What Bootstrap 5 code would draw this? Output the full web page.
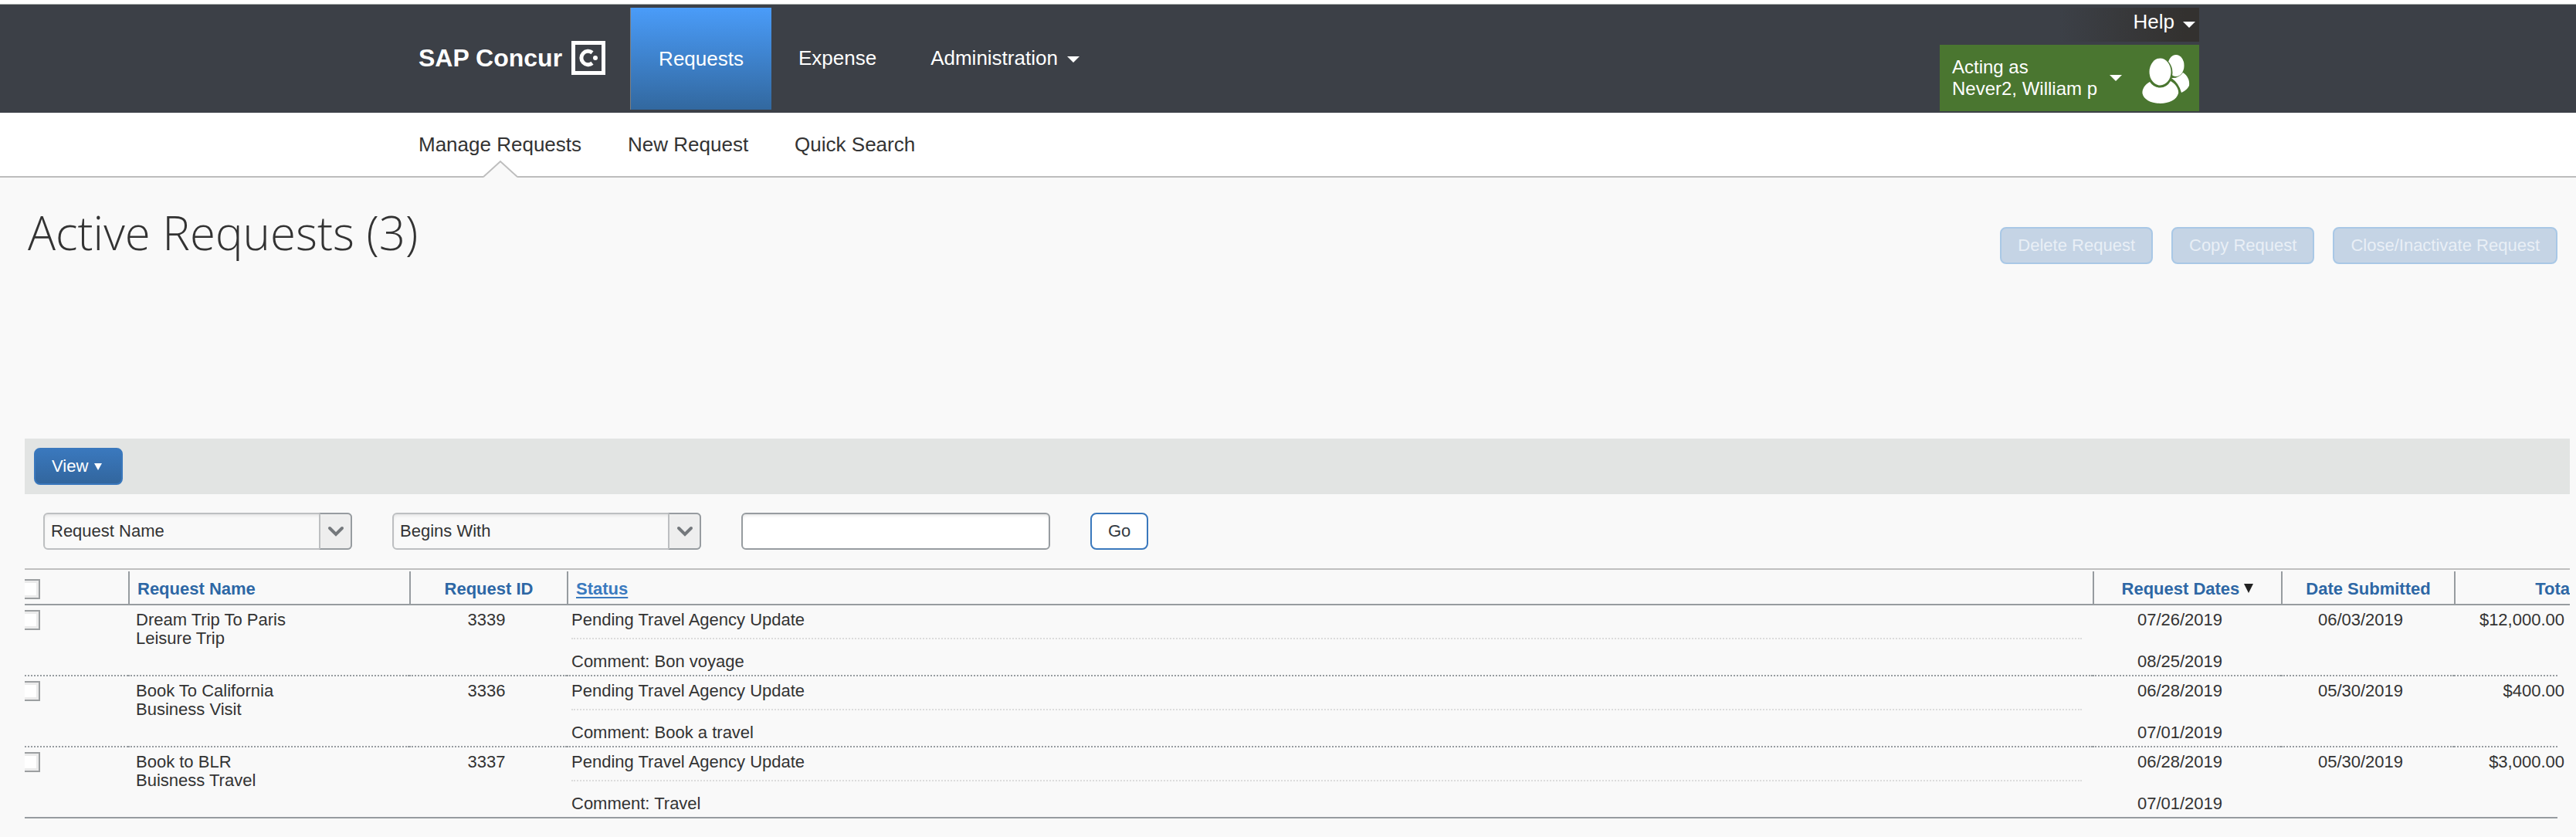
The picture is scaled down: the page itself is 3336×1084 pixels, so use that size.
<!DOCTYPE html>
<html lang="en">
<head>
<meta charset="utf-8">
<meta name="viewport" content="width=device-width, initial-scale=1">
<title>Active Requests - SAP Concur</title>
<link href="https://cdn.jsdelivr.net/npm/bootstrap@5.3.0/dist/css/bootstrap.min.css" rel="stylesheet">
<style>
  body { background: #f9f9f9; color: #333; font-family: "Liberation Sans", Arial, sans-serif; font-size: 22px; line-height: 24px; }
  .shell { max-width: 2360px; }
  .topbar { background: #3c4047; border-top: 1px solid #aab0ae; margin-top: 5px; height: 141px; color: #fff; font-size: 26px; line-height: 32px; }
  .topbar a { color: #fff; text-decoration: none; }
  .main-link { display: flex; align-items: center; padding: 0 35px; height: 130px; }
  .main-link.brand { font-size: 32px; font-weight: 700; padding: 0 32px 0 54px; gap: 12px; }
  .main-link.active { height: 132px; padding: 0 36px; background: linear-gradient(#4a9cf9, #32689f); border-left: 1px solid #7b8085; }
  .arrow-down { display: inline-block; border: 8px solid transparent; border-top-color: #fff; border-bottom: 0; }
  .user-zone { width: 336px; }
  .help-link { height: 44px; width: 180px; padding-right: 5px; gap: 11px; background: linear-gradient(to right, #3c4047, #33312f 90%); }
  .acting { background: #4a7630; height: 86px; font-size: 24px; line-height: 28px; padding: 0 12px 0 16px; border: 0; color: #fff; }
  .subbar { background: #fff; border-bottom: 2px solid #bdbdbd; height: 84px; font-size: 26px; line-height: 32px; }
  .sub-items { gap: 60px; padding-left: 54px; }
  .subbar a { position: relative; color: #333; text-decoration: none; height: 84px; padding-top: 25px; }
  .subbar .notch { position: absolute; left: 50%; bottom: 0; margin-left: -22px; }
  .page-title { font-family: "Open Sans", sans-serif; font-weight: 300; font-size: 60px; line-height: 72px; margin: 0; }
  .title-row { padding: 35px 24px 0 36px; min-height: 338px; }
  .act-btn { font-size: 22px; line-height: 24px; height: 48px; border-width: 2px; border-radius: 8px; padding: 0 21px; }
  .act-btn:disabled { background: #c5d4e5; border-color: #a9c8e6; color: #e9eff6; opacity: 1; }
  .title-row .actions { gap: 24px; padding-top: 29px; }
  .list-zone { margin: 0 8px 0 32px; overflow: hidden; }
  .toolbar-strip { background: #e2e4e3; padding: 12px; }
  .view-btn { border: 2px solid #3a78bd; background: linear-gradient(#3a78bd, #32669e); color: #fff; padding: 0 25px 0 21px; }
  .tiny-arrow { display: inline-block; border: 5px solid transparent; border-top: 9px solid currentColor; border-bottom: 0; }
  .filters { gap: 52px; padding: 24px; }
  .pick, .term { position: relative; width: 400px; height: 48px; }
  .pick select, .term { width: 100%; height: 48px; border: 2px solid #bdbfc1; border-radius: 6px; background: #f9f9f9; font-size: 22px; line-height: 24px; padding: 0 50px 0 8px; color: #333; box-shadow: inset 0 3px 4px -2px #ddd; }
  .pick .drop { position: absolute; right: 0; top: 0; width: 43px; height: 48px; border: 2px solid #979ca0; border-left-color: #bdbfc1; border-radius: 0 6px 6px 0; background: #eee; pointer-events: none; }
  .term { width: 400px; background: #fff; border-color: #979ca0; }
  .go-btn { background: #fff; border-color: #3a78bd; color: #333a42; }
  .grid-wrap { border-top: 2px solid #bfbfbf; padding-top: 2px; }
  .req-grid { width: 100%; table-layout: fixed; border-collapse: separate; border-spacing: 0; }
  .req-grid th { height: 44px; padding: 11px 10px 7px; border-bottom: 2px solid #979ca0; color: #2d67a5; font-weight: 700; vertical-align: top; white-space: nowrap; }
  .req-grid th + th { border-left: 2px solid #979ca0; }
  .req-grid th a { color: inherit; text-decoration: none; }
  .req-grid th a.sorted { color: #3a7abf; text-decoration: underline; text-decoration-thickness: 2px; text-underline-offset: 3px; }
  .req-grid .tiny-arrow { color: #222; border-width: 12px 6px 0; margin-bottom: 2px; }
  .req-grid td { padding: 7px 14px 5px 10px; border-bottom: 2px dotted #979ca0; vertical-align: top; }
  .req-grid tr:last-child td { border-bottom-style: solid; }
  .req-grid tr td.edge { border: 0; padding: 0; }
  .req-grid td.tight { padding-left: 6px; }
  .req-grid td.num { padding-left: 0; padding-right: 18px; }
  .req-grid th.tick, .req-grid td.tick { padding: 6px 0 0; }
  .req-grid th.tick { padding-top: 10px; }
  .req-grid .tick input { display: block; appearance: none; width: 26px; height: 26px; margin: 0 0 0 -6px; border: 2px solid #9c9fa1; background: #fff; box-shadow: inset 0 0 0 3px #ebebeb; }
  .req-grid .rule { border-top: 2px dotted #dcdcdc; margin: 11px 0 17px; opacity: 1; }
  .req-grid .later { margin-top: 30px; }
  .req-grid .amount { margin-right: -27px; }
</style>
<script src="https://cdn.jsdelivr.net/npm/bootstrap@5.3.0/dist/js/bootstrap.bundle.min.js"></script>
</head>
<body>
<div class="bg-white overflow-hidden">
<header class="topbar">
  <div class="shell mx-auto d-flex h-100">
    <nav class="d-flex align-items-start flex-grow-1 pt-1" aria-label="Main">
      <a href="#" class="main-link brand">
        <span>SAP Concur</span>
        <svg width="44" height="44" viewBox="0 0 44 44" aria-hidden="true">
          <rect x="2.5" y="2.5" width="39" height="39" fill="none" stroke="#fff" stroke-width="5"/>
          <path d="M27 15.2A8.7 8.7 0 1 0 27 28.8" fill="none" stroke="#fff" stroke-width="5"/>
          <circle cx="31" cy="22" r="3" fill="#fff"/>
        </svg>
      </a>
      <a href="#" class="main-link active">Requests</a>
      <a href="#" class="main-link">Expense</a>
      <a href="#" class="main-link gap-2">Administration <span class="arrow-down mt-1 ms-1"></span></a>
    </nav>
    <div class="user-zone d-flex flex-column pt-1 gap-1">
      <a href="#" class="help-link d-flex align-items-center justify-content-end align-self-end"><span class="pb-2">Help</span> <span class="arrow-down"></span></a>
      <button type="button" class="acting d-flex align-items-center text-start">
        <span class="flex-grow-1">Acting as<br>Never2, William p</span>
        <span class="arrow-down"></span>
        <svg class="ms-4" width="64" height="66" viewBox="0 0 64 66" fill="#fff" aria-hidden="true">
          <ellipse cx="46" cy="17" rx="10.5" ry="14"/>
          <path d="M40 33Q49 34 55 26C61 30 64 36 63 43Q60 49 53 52Q50 40 40 33Z"/>
          <ellipse cx="25.500" cy="26" rx="16" ry="19" fill="#4a7630"/>
          <ellipse cx="25.500" cy="25" rx="14" ry="17.500"/>
          <path d="M12 38C5 42 2 48 2.500 53C4 61 14 66 25.500 66S47 61 49 53C50 48 46 41 39 37Q34 45.500 25.500 45.500T12 38Z"/>
        </svg>
      </button>
    </div>
  </div>
</header>
<nav class="subbar" aria-label="Requests">
  <div class="shell mx-auto">
    <div class="sub-items d-flex">
      <a href="#">Manage Requests
        <svg class="notch" width="44" height="23" viewBox="0 0 44 23" aria-hidden="true"><path d="M0 23L1 21L22 1L43 21L44 23Z" fill="#f9f9f9"/><path d="M0 22L22 2L44 22" fill="none" stroke="#bdbdbd" stroke-width="2"/></svg>
      </a>
      <a href="#">New Request</a>
      <a href="#">Quick Search</a>
    </div>
  </div>
</nav>
</div>
<main>
  <div class="title-row d-flex justify-content-between align-items-start">
    <h1 class="page-title">Active Requests (3)</h1>
    <div class="actions d-flex">
      <button type="button" class="btn act-btn" disabled>Delete Request</button>
      <button type="button" class="btn act-btn" disabled>Copy Request</button>
      <button type="button" class="btn act-btn" disabled>Close/Inactivate Request</button>
    </div>
  </div>
  <div class="list-zone">
    <div class="toolbar-strip d-flex">
      <button type="button" class="btn act-btn view-btn d-flex align-items-center gap-2">View <span class="tiny-arrow"></span></button>
    </div>
    <form class="filters d-flex">
      <div class="pick">
        <select class="form-select" aria-label="Search field"><option>Request Name</option></select>
        <span class="drop d-flex align-items-center justify-content-center"><svg width="22" height="14" viewBox="0 0 22 14" aria-hidden="true"><path d="M3 3L11 11L19 3" fill="none" stroke="#74787c" stroke-width="4" stroke-linecap="round"/></svg></span>
      </div>
      <div class="pick">
        <select class="form-select" aria-label="Search condition"><option>Begins With</option></select>
        <span class="drop d-flex align-items-center justify-content-center"><svg width="22" height="14" viewBox="0 0 22 14" aria-hidden="true"><path d="M3 3L11 11L19 3" fill="none" stroke="#74787c" stroke-width="4" stroke-linecap="round"/></svg></span>
      </div>
      <input type="text" class="form-control term" aria-label="Search text">
      <button type="button" class="btn act-btn go-btn">Go</button>
    </form>
    <div class="grid-wrap">
      <table class="req-grid">
        <colgroup><col style="width:134px"><col style="width:364px"><col style="width:204px"><col><col style="width:244px"><col style="width:224px"><col style="width:134px"><col style="width:16px"></colgroup>
        <thead>
          <tr>
            <th class="tick"><input type="checkbox" aria-label="Select all"></th>
            <th><a href="#">Request Name</a></th>
            <th class="text-center"><a href="#">Request ID</a></th>
            <th><a href="#" class="sorted">Status</a></th>
            <th class="text-center"><a href="#">Request Dates</a> <span class="tiny-arrow"></span></th>
            <th class="text-center"><a href="#">Date Submitted</a></th>
            <th class="text-end pe-0" colspan="2"><a href="#">Tota</a></th>
          </tr>
        </thead>
        <tbody>
          <tr>
            <td class="tick"><input type="checkbox" aria-label="Select request 3339"></td>
            <td>Dream Trip To Paris<br>Leisure Trip</td>
            <td class="text-center">3339</td>
            <td class="tight">Pending Travel Agency Update<div class="rule"></div>Comment: Bon voyage</td>
            <td class="text-center num">07/26/2019<div class="later">08/25/2019</div></td>
            <td class="text-center num">06/03/2019</td>
            <td class="text-end num"><div class="amount">$12,000.00</div></td><td class="edge"></td>
          </tr>
          <tr>
            <td class="tick"><input type="checkbox" aria-label="Select request 3336"></td>
            <td>Book To California<br>Business Visit</td>
            <td class="text-center">3336</td>
            <td class="tight">Pending Travel Agency Update<div class="rule"></div>Comment: Book a travel</td>
            <td class="text-center num">06/28/2019<div class="later">07/01/2019</div></td>
            <td class="text-center num">05/30/2019</td>
            <td class="text-end num"><div class="amount">$400.00</div></td><td class="edge"></td>
          </tr>
          <tr>
            <td class="tick"><input type="checkbox" aria-label="Select request 3337"></td>
            <td>Book to BLR<br>Buisness Travel</td>
            <td class="text-center">3337</td>
            <td class="tight">Pending Travel Agency Update<div class="rule"></div>Comment: Travel</td>
            <td class="text-center num">06/28/2019<div class="later">07/01/2019</div></td>
            <td class="text-center num">05/30/2019</td>
            <td class="text-end num"><div class="amount">$3,000.00</div></td><td class="edge"></td>
          </tr>
        </tbody>
      </table>
    </div>
  </div>
</main>
</body>
</html>
